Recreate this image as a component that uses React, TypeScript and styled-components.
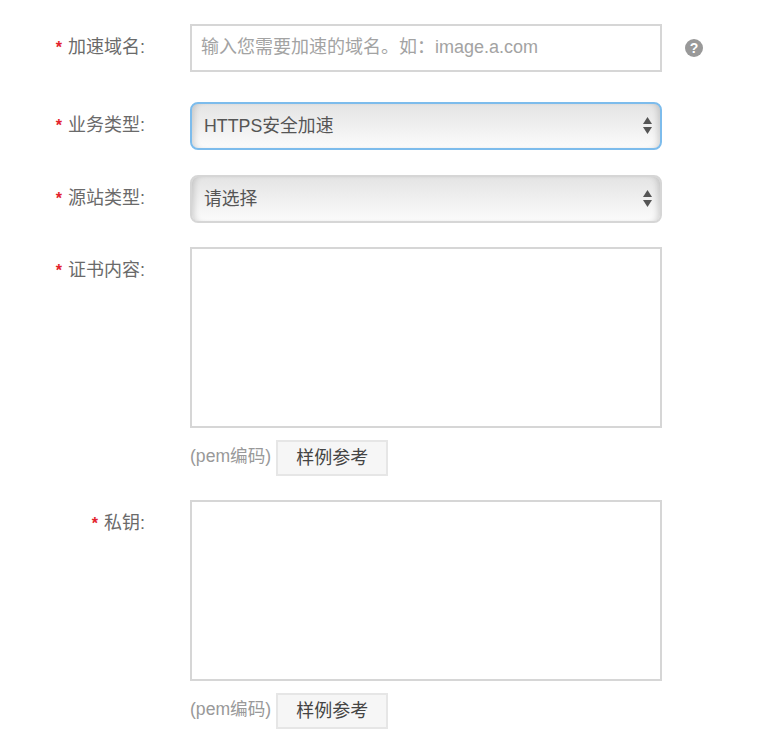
import React from "react";
import styled, { createGlobalStyle } from "styled-components";

const FONT = `"Liberation Sans", "Noto Sans CJK SC", sans-serif`;

const GlobalStyle = createGlobalStyle`
  html, body { margin: 0; padding: 0; background: #fff; }
  body { font-family: ${FONT}; color: #666; }
`;

const Form = styled.form`
  display: flex;
  flex-direction: column;
  padding: 24px 0 0;
`;

const Row = styled.div<{ $after?: number }>`
  display: grid;
  grid-template-columns: 145px 472px 1fr;
  column-gap: 45px;
  margin-bottom: ${(p) => p.$after ?? 25}px;
`;

const Label = styled.label<{ $top?: number }>`
  justify-self: end;
  padding-top: ${(p) => p.$top ?? 0}px;
  padding-bottom: ${(p) => (p.$top ? 0 : 1)}px;
  font-size: 18px;
  line-height: 24px;
  color: #6a6a6a;
  white-space: nowrap;
  align-self: ${(p) => (p.$top ? "start" : "center")};
`;

const Star = styled.span`
  color: #e3232c;
  font-size: 16px;
  font-weight: 700;
  margin-right: 6px;
`;

const TextInput = styled.input`
  box-sizing: border-box;
  width: 100%;
  height: 48px;
  padding: 0 9px 1px;
  border: 2px solid #d6d6d6;
  outline: none;
  font-family: ${FONT};
  font-size: 18px;
  color: #666;
  &::placeholder { color: #a3a3a3; opacity: 1; }
`;

const SelectBox = styled.div`
  position: relative;
  height: 48px;
`;

const Select = styled.select<{ $focused?: boolean }>`
  appearance: none;
  box-sizing: border-box;
  width: 100%;
  height: 100%;
  padding: 0 30px 1px 12px;
  border: 2px solid ${(p) => (p.$focused ? "#7dbcec" : "#d6d6d6")};
  border-radius: 8px;
  outline: none;
  background: linear-gradient(to bottom, #e4e4e4, #fbfbfb);
  box-shadow: inset 6px 0 6px -4px rgba(0, 0, 0, 0.16),
    inset -6px 0 6px -4px rgba(0, 0, 0, 0.16);
  font-family: ${FONT};
  font-size: 17.8px;
  color: #555;
`;

const Carets = styled.svg`
  position: absolute;
  right: 10px;
  top: 15px;
  width: 9px;
  height: 18px;
  pointer-events: none;
`;

const Help = styled.span`
  align-self: center;
  width: 18px;
  height: 18px;
  margin-left: -22px;
  border-radius: 50%;
  background: #999;
  color: #fff;
  font-size: 14px;
  font-weight: 700;
  line-height: 18px;
  text-align: center;
`;

const Area = styled.textarea`
  display: block;
  box-sizing: border-box;
  width: 100%;
  height: 181px;
  border: 2px solid #d6d6d6;
  outline: none;
  resize: none;
`;

const HintRow = styled.div`
  display: flex;
  align-items: center;
  gap: 5px;
  margin-top: 12px;
`;

const Hint = styled.span`
  font-size: 17.6px;
  line-height: 24px;
  margin-bottom: 4px;
  color: #999;
`;

const SampleButton = styled.button`
  box-sizing: border-box;
  width: 112px;
  height: 36px;
  padding: 0 0 4px;
  border: 2px solid #e6e6e6;
  background: #f6f6f6;
  font-family: ${FONT};
  font-size: 18px;
  color: #444;
`;

const CaretIcon = () => (
  <Carets viewBox="0 0 9 18">
    <path d="M4.5 0 9 7H0z" fill="#555" />
    <path d="M0 10h9l-4.5 7z" fill="#555" />
  </Carets>
);

const Req = ({ text, top }: { text: string; top?: number }) => (
  <Label $top={top}>
    <Star>*</Star>
    {text}:
  </Label>
);

const CertField = ({ label, after }: { label: string; after?: number }) => (
  <Row $after={after}>
    <Req text={label} top={11} />
    <div>
      <Area />
      <HintRow>
        <Hint>(pem编码)</Hint>
        <SampleButton type="button">样例参考</SampleButton>
      </HintRow>
    </div>
  </Row>
);

export default function App() {
  return (
    <>
      <GlobalStyle />
      <Form>
        <Row $after={30}>
          <Req text="加速域名" />
          <TextInput placeholder={"输入您需要加速的域名。如\uFF1Aimage.a.com"} />
          <Help>?</Help>
        </Row>
        <Row>
          <Req text="业务类型" />
          <SelectBox>
            <Select $focused defaultValue="https">
              <option value="https">HTTPS安全加速</option>
            </Select>
            <CaretIcon />
          </SelectBox>
        </Row>
        <Row $after={24}>
          <Req text="源站类型" />
          <SelectBox>
            <Select defaultValue="">
              <option value="">请选择</option>
            </Select>
            <CaretIcon />
          </SelectBox>
        </Row>
        <CertField label="证书内容" after={24} />
        <CertField label="私钥" after={0} />
      </Form>
    </>
  );
}
